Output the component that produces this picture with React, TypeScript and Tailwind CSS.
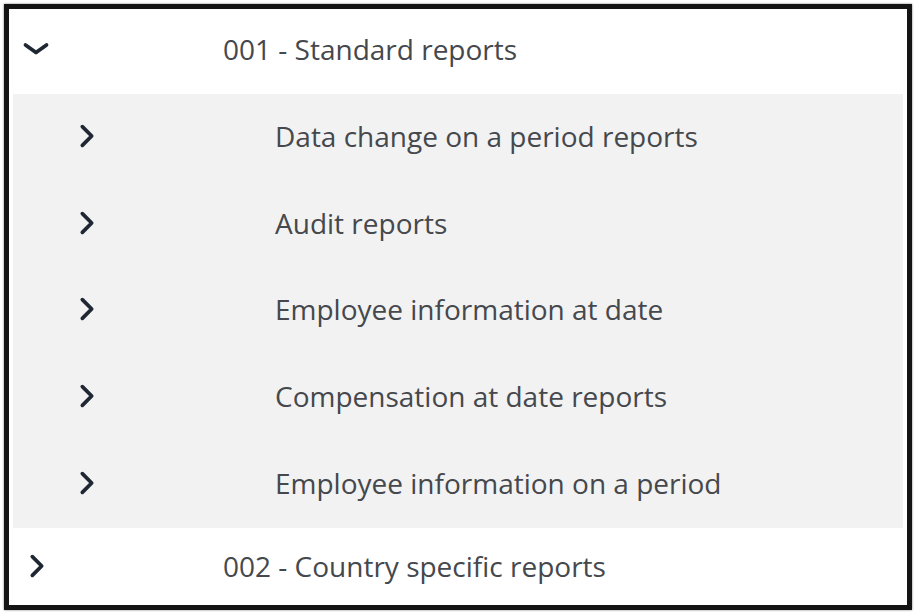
import React from 'react';

const reports = [
    'Data change on a period reports',
    'Audit reports',
    'Employee information at date',
    'Compensation at date reports',
    'Employee information on a period',
];

const Chevron = ({ down = false }: { down?: boolean }) => (
    <svg
        width="28"
        height="28"
        viewBox="0 0 24 24"
        fill="none"
        stroke="#1f2733"
        strokeWidth="3.2"
        strokeLinecap="round"
        strokeLinejoin="round"
    >
        {down ? <path d="M3 8.5l9 6.5 9-6.5" /> : <path d="M8 4l8 8-8 8" />}
    </svg>
);

const App = () => {
    return (
        <div
            className="w-[916px] h-[614px] bg-white p-[4px]"
            style={{ fontFamily: '"Open Sans", "Noto Sans", sans-serif' }}
        >
            <div className="h-full border-[5px] border-[#141414] shadow-[0_0_2px_#777] flex flex-col text-[28px] text-[#45484c]">
                <div className="h-[85px] flex items-center shrink-0 pb-[6px]">
                    <div className="w-[214px] pl-[13px] flex items-center">
                        <Chevron down />
                    </div>
                    <span>001 - Standard reports</span>
                </div>

                <div className="mx-[4px] bg-[#f2f2f2] flex flex-col">
                    {reports.map((label) => (
                        <div key={label} className="h-[86.8px] flex items-center pb-[3px]">
                            <div className="w-[262px] pl-[60px] flex items-center">
                                <Chevron />
                            </div>
                            <span>{label}</span>
                        </div>
                    ))}
                </div>

                <div className="flex-1 flex items-center">
                    <div className="w-[214px] pl-[14px] flex items-center">
                        <Chevron />
                    </div>
                    <span>002 - Country specific reports</span>
                </div>
            </div>
        </div>
    );
};

export default App;
